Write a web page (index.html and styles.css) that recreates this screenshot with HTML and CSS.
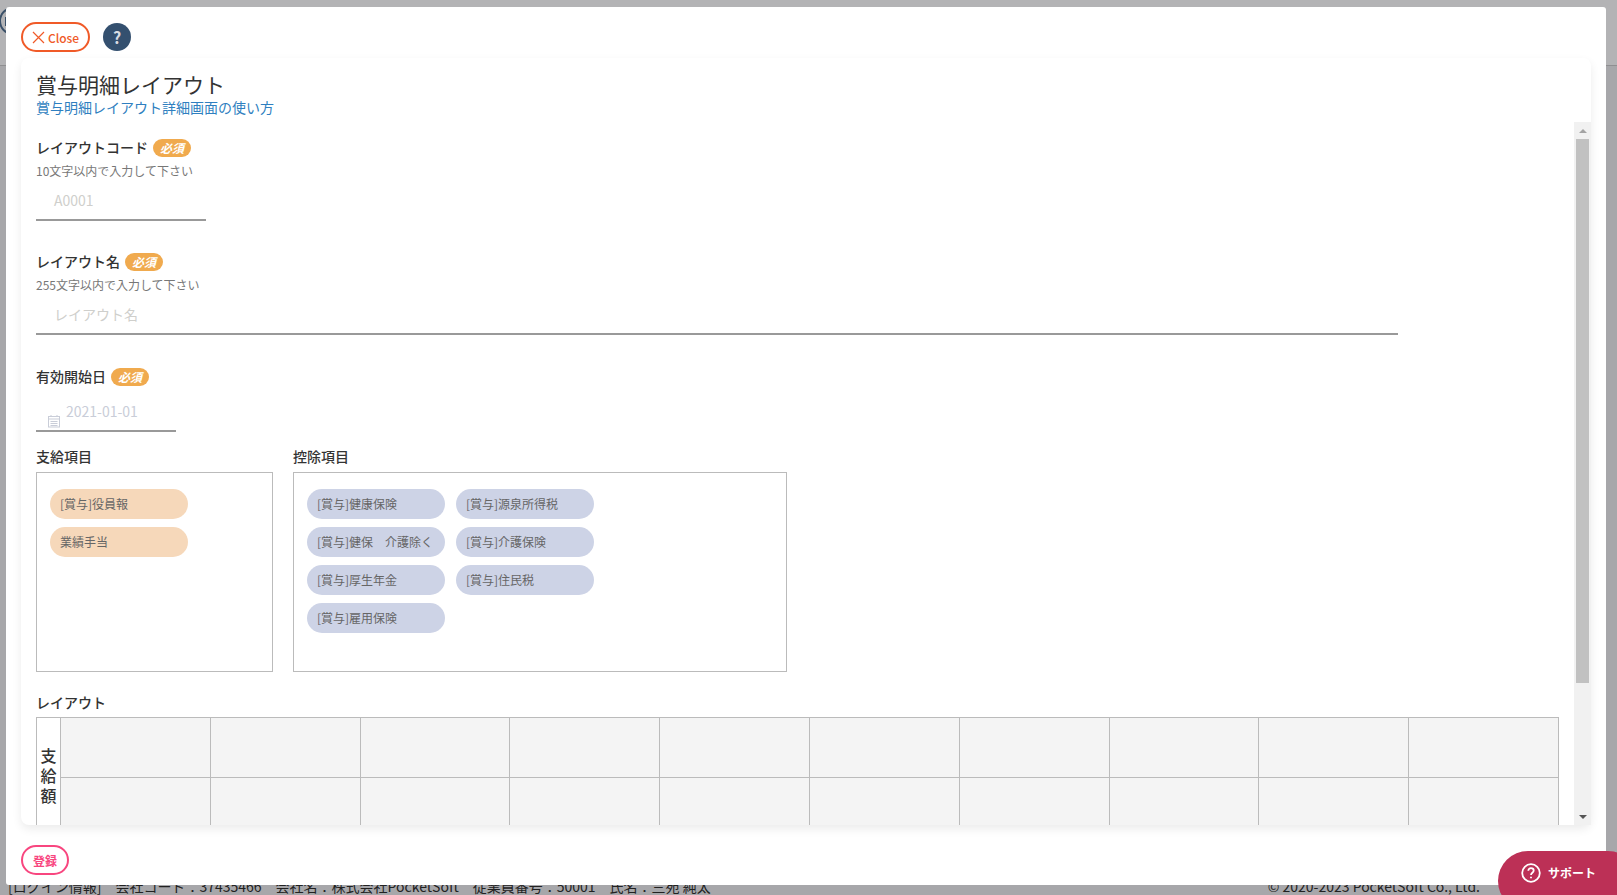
FILE: index.html
```html
<!DOCTYPE html>
<html lang="ja">
<head>
  <meta charset="UTF-8">
  <title>賞与明細レイアウト</title>
  <link rel="stylesheet" href="styles.css">
</head>
<body>

<!-- PAGE BEHIND THE MODAL -->
<div class="page">
  <div class="page-head"><span class="page-logo"></span></div>
  <div class="page-foot">
    <span>[ログイン情報]　会社コード：37435466　会社名：株式会社PocketSoft　従業員番号：50001　氏名：三苑 純太</span>
    <span>© 2020-2023 PocketSoft Co., Ltd.</span>
  </div>
</div>

<!-- MODAL -->
<div class="modal">
  <div class="modal-head">
    <button class="btn-close">
      <svg width="13" height="13" viewBox="0 0 13 13"><path d="M1 1l11 11M12 1L1 12" stroke="#f05a28" stroke-width="1.2" fill="none"/></svg>
      Close
    </button>
    <span class="btn-help">?</span>
  </div>

  <div class="card">
    <div class="card-title">
      <h1>賞与明細レイアウト</h1>
      <a href="#">賞与明細レイアウト詳細画面の使い方</a>
    </div>

    <div class="card-scroll">
      <div class="form">
        <div class="field field-code">
          <div class="label">レイアウトコード <span class="badge">必須</span></div>
          <div class="hint">10文字以内で入力して下さい</div>
          <div class="input input-code">A0001</div>
        </div>

        <div class="field field-name">
          <div class="label">レイアウト名 <span class="badge">必須</span></div>
          <div class="hint">255文字以内で入力して下さい</div>
          <div class="input input-name">レイアウト名</div>
        </div>

        <div class="field field-date">
          <div class="label">有効開始日 <span class="badge">必須</span></div>
          <div class="input-date">
            <svg width="14" height="14" viewBox="0 0 14 14" fill="none" stroke="#c9cdd8"><rect x="1.5" y="2.5" width="11" height="10.500"/><path d="M1.500 5h11M3.500 7.500h7M3.500 9.500h7M3.500 11.500h7M4 1v2M10 1v2"/></svg>
            <span>2021-01-01</span>
          </div>
        </div>

        <div class="pools">
          <div>
            <div class="pool-label">支給項目</div>
            <div class="pool pool-pay">
              <span class="chip chip-pay">[賞与]役員報</span>
              <span class="chip chip-pay chip-row">業績手当</span>
            </div>
          </div>
          <div>
            <div class="pool-label">控除項目</div>
            <div class="pool pool-deduct">
              <span class="chip chip-deduct">[賞与]健康保険</span>
              <span class="chip chip-deduct">[賞与]源泉所得税</span>
              <span class="chip chip-deduct">[賞与]健保　介護除く</span>
              <span class="chip chip-deduct">[賞与]介護保険</span>
              <span class="chip chip-deduct">[賞与]厚生年金</span>
              <span class="chip chip-deduct">[賞与]住民税</span>
              <span class="chip chip-deduct">[賞与]雇用保険</span>
            </div>
          </div>
        </div>

        <div class="pool-label layout-label">レイアウト</div>
        <table class="layout">
          <tr>
            <th rowspan="2"><div class="side-label">支<br>給<br>額</div></th>
            <td></td><td></td><td></td><td></td><td></td><td></td><td></td><td></td><td></td><td></td>
          </tr>
          <tr>
            <td></td><td></td><td></td><td></td><td></td><td></td><td></td><td></td><td></td><td></td>
          </tr>
        </table>
      </div>

      <div class="scrollbar">
        <span class="arrow-up"></span>
        <span class="thumb"></span>
        <span class="arrow-down"></span>
      </div>
    </div>
  </div>

  <div class="modal-foot">
    <button class="btn-save">登録</button>
  </div>
</div>

<!-- SUPPORT BUTTON -->
<div class="support">
  <svg width="20" height="20" viewBox="0 0 20 20" fill="none" stroke="white" stroke-width="1.800"><circle cx="10" cy="10" r="8.800"/><path d="M7.300 7.800c0-1.600 1.200-2.600 2.700-2.600s2.700 1 2.700 2.400c0 2.200-2.700 2.100-2.700 4.400"/><path d="M10 13.700v1.600"/></svg>
  サポート
</div>

</body>
</html>
```

FILE: styles.css
```css
* {
  box-sizing: border-box;
}

html, body {
  height: 100%;
}

body {
  margin: 0;
  overflow: hidden;
  font-family: "Noto Sans CJK JP", "Noto Sans", sans-serif;
  color: #333;
  background-color: #a7a7aa;
}

.page {
  height: 895px;
  display: flex;
  flex-direction: column;
  justify-content: space-between;
}

.page-head {
  height: 66px;
  background-color: #b3b3b5;
  border-bottom: 1px solid #8f8f91;
  padding: 7px 0 0 0;
}

.page-logo {
  display: block;
  width: 28px;
  height: 28px;
  margin-left: -1px;
  padding: 8px 0 0 4px;
  border: 2px solid #3a5068;
  border-radius: 50%;
}

.page-logo::before {
  content: "";
  display: block;
  width: 2px;
  height: 9px;
  background-color: #3a5068;
}

.page-foot {
  display: flex;
  justify-content: space-between;
  height: 18px;
  padding: 0 137px 0 8px;
  font-size: 14px;
  line-height: 18px;
  color: #222;
}

/* modal */
.modal {
  position: absolute;
  left: 6px;
  top: 7px;
  width: 1600px;
  height: 878px;
  background: white;
  border-radius: 3px;
  padding: 15px 15px 0 15px;
  display: flex;
  flex-direction: column;
}

.modal-head {
  height: 36px;
  display: flex;
  align-items: flex-start;
  gap: 13px;
}

.btn-close {
  width: 69px;
  height: 30px;
  border: 2px solid #f05a28;
  border-radius: 15px;
  background: white;
  color: #f05a28;
  font-family: inherit;
  font-size: 12px;
  font-weight: 500;
  padding: 0;
  display: flex;
  align-items: center;
  justify-content: center;
  gap: 3px;
}

.btn-help {
  width: 28px;
  height: 28px;
  margin-top: 1px;
  border-radius: 50%;
  background-color: #34506f;
  color: #d9dde3;
  font-size: 16px;
  font-weight: bold;
  line-height: 28px;
  text-align: center;
}

.card {
  height: 767px;
  background: white;
  border-radius: 8px;
  box-shadow: 0 4px 10px rgba(0, 0, 0, 0.08);
  display: flex;
  flex-direction: column;
}

.card-title {
  height: 64px;
  padding: 11px 15px 0 15px;
}

.card-title h1 {
  margin: 0;
  font-size: 21px;
  font-weight: 400;
  line-height: 30px;
}

.card-title a {
  display: block;
  color: #2f7fc0;
  font-size: 14px;
  line-height: 16px;
  text-decoration: none;
}

.card-scroll {
  flex: 1;
  display: flex;
  overflow: hidden;
}

.form {
  flex: 1;
  padding: 17px 15px 0 15px;
  overflow: hidden;
}

.field-code {
  height: 114px;
}

.field-name {
  height: 115px;
}

.field-date {
  height: 80px;
}

.label {
  height: 18px;
  font-size: 14px;
  font-weight: 500;
  line-height: 16px;
  display: flex;
  align-items: flex-start;
  gap: 5px;
}

.badge {
  width: 38px;
  height: 18px;
  border-radius: 9px;
  background-color: #f0aa4e;
  color: white;
  font-size: 12px;
  font-weight: bold;
  font-style: italic;
  line-height: 18px;
  text-align: center;
}

.hint {
  margin-top: 5px;
  font-size: 12px;
  line-height: 18px;
  color: #777;
}

.input {
  height: 41px;
  padding: 10px 0 0 18px;
  border-bottom: 2px solid #999;
  color: #cfcfcc;
  font-size: 14px;
  line-height: 20px;
}

.input-code {
  width: 170px;
}

.input-name {
  width: 1362px;
}

.input-date {
  width: 140px;
  height: 46px;
  padding: 15px 0 0 11px;
  border-bottom: 2px solid #999;
  color: #c9cdd8;
  font-size: 14px;
  line-height: 20px;
  display: flex;
  align-items: flex-start;
  gap: 5px;
}

.input-date svg {
  margin-top: 13px;
  flex-shrink: 0;
}

.pools {
  display: flex;
  gap: 20px;
}

.pool-label {
  height: 20px;
  font-size: 14px;
  font-weight: 500;
  line-height: 16px;
  margin-bottom: 4px;
}

.pool {
  height: 200px;
  border: 1px solid #bbb;
  padding: 16px 13px;
  display: grid;
  grid-template-columns: repeat(2, 138px);
  grid-auto-rows: 30px;
  align-content: start;
  gap: 8px 11px;
}

.pool-pay {
  width: 237px;
}

.pool-deduct {
  width: 494px;
}

.chip {
  border-radius: 15px;
  padding-left: 10px;
  font-size: 12px;
  line-height: 30px;
  color: #666;
  white-space: nowrap;
}

.chip-pay {
  background-color: #f6d8ba;
}

.chip-row {
  grid-column: 1;
}

.chip-deduct {
  background-color: #cdd3e6;
}

.layout-label {
  margin-top: 21px;
  margin-bottom: 4px;
  line-height: 18px;
}

.layout {
  width: 1523px;
  border-collapse: collapse;
  table-layout: fixed;
}

.layout th, .layout td {
  border: 1px solid #bbb;
  height: 60px;
  padding: 0;
}

.layout th {
  width: 24px;
  font-size: 16px;
  font-weight: 500;
  line-height: 20px;
}

.side-label {
  margin-bottom: 6px;
}

.layout td {
  background-color: #f4f4f4;
}

/* fake scrollbar, the native one is not drawn the same in headless */
.scrollbar {
  width: 17px;
  background-color: #f1f1f1;
  display: flex;
  flex-direction: column;
  align-items: center;
}

.arrow-up {
  margin: 7px 0 6px 0;
  border-left: 4px solid transparent;
  border-right: 4px solid transparent;
  border-bottom: 4px solid #a3a3a3;
}

.thumb {
  width: 13px;
  height: 544px;
  background-color: #c1c1c1;
}

.arrow-down {
  margin-top: auto;
  margin-bottom: 6px;
  border-left: 4px solid transparent;
  border-right: 4px solid transparent;
  border-top: 4px solid #555;
}

.modal-foot {
  padding-top: 20px;
}

.btn-save {
  width: 48px;
  height: 30px;
  border: 2px solid #f8467f;
  border-radius: 15px;
  background: white;
  color: #f8467f;
  font-family: inherit;
  font-size: 12px;
  font-weight: bold;
  padding: 0;
}

/* support */
.support {
  position: fixed;
  left: 1498px;
  top: 851px;
  width: 140px;
  height: 60px;
  border-radius: 30px;
  background-color: #bc3056;
  color: white;
  font-size: 12px;
  font-weight: bold;
  padding: 12px 0 0 23px;
  display: flex;
  align-items: flex-start;
  gap: 7px;
  line-height: 20px;
}
```
